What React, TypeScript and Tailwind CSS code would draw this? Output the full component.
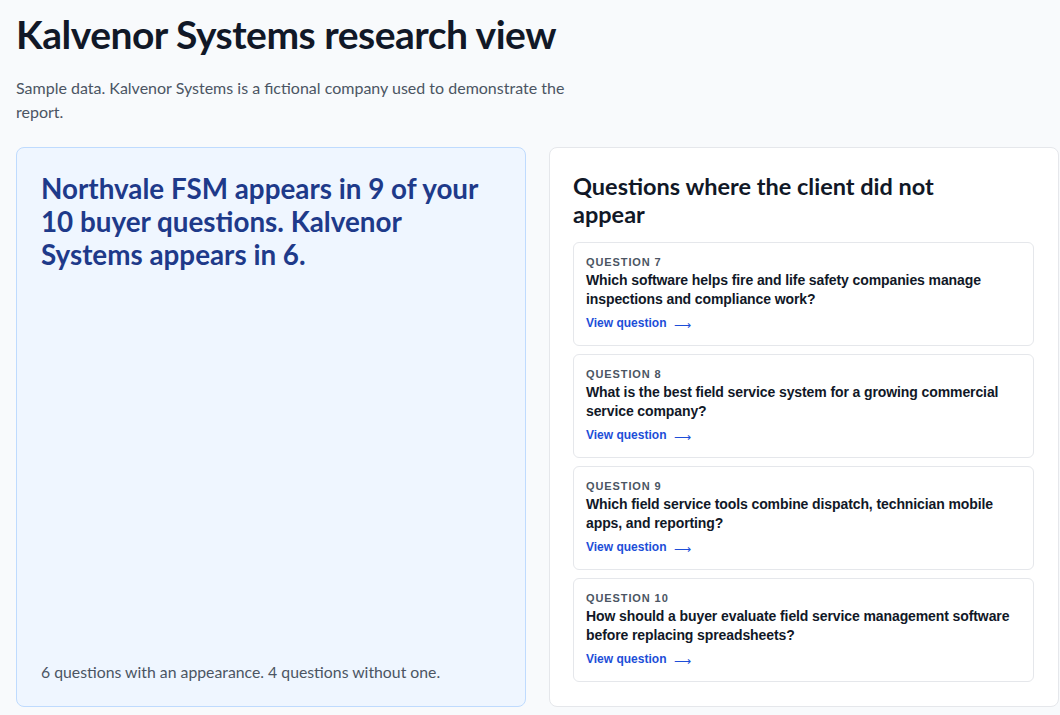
import React from "react";

const questions = [
  { n: 7, text: "Which software helps fire and life safety companies manage inspections and compliance work?" },
  { n: 8, text: "What is the best field service system for a growing commercial service company?" },
  { n: 9, text: "Which field service tools combine dispatch, technician mobile apps, and reporting?" },
  { n: 10, text: "How should a buyer evaluate field service management software before replacing spreadsheets?" },
];

const ui = { fontFamily: 'Lato, "Open Sans", sans-serif' };
const arial = { fontFamily: '"Liberation Sans", Arial, sans-serif' };

export default function App() {
  return (
    <div className="min-h-[715px] bg-[#f8fafc] pl-4 pt-[10px] pb-2" style={ui}>
      <h1 className="text-[39px] leading-[48px] font-bold tracking-[-0.5px] text-[#111827]">
        Kalvenor Systems research view
      </h1>
      <p className="mt-[18px] max-w-[576px] text-[16px] leading-6 text-[#4b5563]">
        Sample data. Kalvenor Systems is a fictional company used to demonstrate the report.
      </p>
      <div className="mt-[23px] grid grid-cols-[510px_510px] gap-[23px]">
        <div className="flex h-[560px] flex-col justify-between rounded-lg border border-[#bfdbfe] bg-[#eff6ff] p-6">
          <h2 className="text-[27.8px] leading-[33px] font-bold text-[#1e3a8a]">
            Northvale FSM appears in 9 of your 10 buyer questions. Kalvenor Systems appears in 6.
          </h2>
          <p className="text-[15.8px] leading-5 text-[#4b5563]">
            6 questions with an appearance. 4 questions without one.
          </p>
        </div>
        <div className="rounded-lg border border-[#e5e7eb] bg-white py-6 pl-[23px] pr-6">
          <h2 className="max-w-[400px] text-[23.5px] leading-[28px] font-bold text-[#111827]">
            Questions where the client did not appear
          </h2>
          <div className="mt-[14px] flex flex-col gap-2" style={arial}>
            {questions.map((q) => (
              <div key={q.n} className="rounded-md border border-[#e5e7eb] bg-white px-3 pt-3 pb-[14px]">
                <div className="text-[11px] leading-[14px] font-bold tracking-[0.9px] text-[#4b5563]">
                  QUESTION {q.n}
                </div>
                <div className="mt-[2px] text-[14px] leading-[19px] font-bold tracking-[-0.1px] text-[#111827]">
                  {q.text}
                </div>
                <a className="mt-[6px] flex h-4 items-center gap-[8px] text-[12px] leading-4 font-bold text-[#1d4ed8]">
                  View question
                  <span className="translate-y-[2px] text-[12px] leading-4 font-normal">⟶</span>
                </a>
              </div>
            ))}
          </div>
        </div>
      </div>
    </div>
  );
}
